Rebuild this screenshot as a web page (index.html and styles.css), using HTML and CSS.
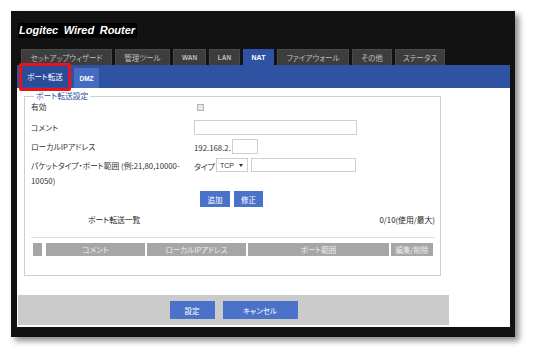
FILE: index.html
```html
<!DOCTYPE html>
<html lang="ja">
<head>
<meta charset="utf-8">
<title>Logitec Wired Router</title>
<link rel="stylesheet" href="styles.css">
</head>
<body>
<div class="page">
  <div class="frame">
    <div class="brand"><span class="logo">Logitec Wired Router</span></div>
    <nav class="tabs">
      <span class="tab t-setup">セットアップウィザード</span>
      <span class="tab t-admin">管理ツール</span>
      <span class="tab t-wan">WAN</span>
      <span class="tab t-lan">LAN</span>
      <span class="tab t-nat active">NAT</span>
      <span class="tab t-fw">ファイアウォール</span>
      <span class="tab t-etc">その他</span>
      <span class="tab t-status">ステータス</span>
    </nav>
    <div class="main">
      <div class="subbar">
        <span class="subtab current">ポート転送</span>
        <span class="subtab dmz">DMZ</span>
        <span class="highlight"></span>
      </div>
      <div class="content">
        <fieldset class="box">
          <legend class="legend">ポート転送設定</legend>
          <div class="row r-enable">
            <span class="label">有効</span>
            <span class="value"><span class="check"></span></span>
          </div>
          <div class="row r-comment">
            <span class="label">コメント</span>
            <span class="value"><span class="input i-comment"></span></span>
          </div>
          <div class="row r-ip">
            <span class="label">ローカルIPアドレス</span>
            <span class="value"><span class="ip">192.168.2.</span><span class="input i-ip"></span></span>
          </div>
          <div class="row r-packet">
            <span class="label two">パケットタイプ・ポート範囲 (例:21,80,10000-<br>10050)</span>
            <span class="value top"><span class="type">タイプ</span><span class="select">TCP<span class="caret"></span></span><span class="input i-port"></span></span>
          </div>
          <div class="actions">
            <span class="btn b-add">追加</span>
            <span class="btn b-edit">修正</span>
          </div>
          <div class="listhead">
            <span class="listtitle">ポート転送一覧</span>
            <span class="count">0/10(使用/最大)</span>
          </div>
          <div class="rule"></div>
          <div class="thead">
            <span class="th"></span>
            <span class="th">コメント</span>
            <span class="th">ローカルIPアドレス</span>
            <span class="th">ポート範囲</span>
            <span class="th">編集/削除</span>
          </div>
        </fieldset>
        <div class="footer">
          <span class="btn f-save">設定</span>
          <span class="btn f-cancel">キャンセル</span>
        </div>
      </div>
    </div>
  </div>
</div>
</body>
</html>
```

FILE: styles.css
```css
* { box-sizing: border-box; }
html, body { margin: 0; padding: 0; background: #fff; }
body {
  font-family: "Noto Sans CJK JP", "Noto Sans", sans-serif;
  font-feature-settings: "palt";
  font-size: 7.8px;
  color: #333;
  width: 534px;
  height: 356px;
  overflow: hidden;
}
.page { padding: 11px 0 0 11px; }
.frame {
  width: 504px;
  height: 326px;
  background: #121212;
  box-shadow: 4px 4px 6px rgba(0,0,0,0.45);
  display: flex;
  flex-direction: column;
}
.brand {
  height: 38px;
  padding: 12px 0 0 7px;
}
.logo {
  display: inline-block;
  background: #000;
  color: #fff;
  font-family: "Liberation Sans", Arial, sans-serif;
  font-weight: bold;
  font-style: italic;
  font-size: 11px;
  line-height: 15px;
  word-spacing: 2.5px;
  padding: 0 2px 0 1px;
  height: 15px;
}
.tabs {
  display: flex;
  gap: 3px;
  height: 16px;
  padding-left: 10px;
}
.tab {
  height: 16px;
  background: #3d3d3d;
  border: 1px solid #4a4a4a;
  border-bottom: none;
  color: #bdbdbd;
  display: flex;
  align-items: center;
  justify-content: center;
  font-size: 7.5px;
  white-space: nowrap;
}
.t-setup { width: 91px; }
.t-admin { width: 55px; }
.t-wan { width: 33px; font-weight: bold; font-family: "Liberation Sans", sans-serif; font-size: 6.5px; }
.t-lan { width: 31px; font-weight: bold; font-family: "Liberation Sans", sans-serif; font-size: 6.5px; }
.t-nat { width: 31px; font-weight: bold; font-family: "Liberation Sans", sans-serif; font-size: 7px; }
.t-fw { width: 72px; }
.t-etc { width: 40px; }
.t-status { width: 50px; }
.tab.active {
  background: #2f52a2;
  border-color: #2f52a2;
  color: #fff;
}
.main {
  margin: 0 5px 10px 6px;
  flex: 1;
  display: flex;
  flex-direction: column;
  background: #fff;
}
.subbar {
  position: relative;
  height: 23px;
  background: #2f52a2;
  display: flex;
  align-items: flex-end;
  padding-left: 5px;
  gap: 6px;
}
.subtab {
  height: 21px;
  display: flex;
  align-items: center;
  justify-content: center;
  color: #fff;
  font-size: 7.5px;
}
.subtab.current { width: 46px; background: #2c4c9a; margin-bottom: 1px; }
.subtab.dmz { width: 25px; height: 20px; background: #466bc2; font-family: "Liberation Sans", sans-serif; font-weight: bold; font-size: 6.5px; }
.highlight {
  position: absolute;
  left: 2px;
  top: -2px;
  width: 52px;
  height: 28px;
  border: 3px solid #e8141b;
  border-radius: 2px;
}
.content {
  flex: 1;
  display: flex;
  flex-direction: column;
}
.box {
  margin: 3px 0 0 7px;
  width: 417px;
  border: 1px solid #cfcfcf;
  padding: 0 5px 19px 6px;
  min-width: 0;
}
.legend {
  color: #2c4f9e;
  font-size: 7.8px;
  line-height: 10px;
  padding: 0 2px;
  margin-left: 3px;
}
.row { display: flex; }
.label { width: 163px; flex: none; line-height: 15px; white-space: nowrap; }
.value { display: flex; align-items: center; gap: 0; }
.value.top { align-items: flex-start; height: 15px; }
.r-enable { height: 12px; align-items: center; }
.r-enable .label { line-height: 12px; }
.check {
  display: block;
  width: 7px;
  height: 7px;
  margin-left: 3px;
  background: #e8e8e8;
  border: 1px solid #b5b5b5;
}
.r-comment { margin-top: 7px; height: 15px; }
.r-ip { margin-top: 4px; height: 15px; }
.r-packet { margin-top: 4px; height: 30px; }
.input {
  display: block;
  background: #fff;
  border: 1px solid #cfcfcf;
}
.i-comment { width: 163px; height: 15px; }
.ip { width: 38px; line-height: 15px; padding-top: 2px; white-space: nowrap; }
.i-ip { width: 26px; height: 15px; }
.type { width: 22px; line-height: 15px; padding-top: 1px; white-space: nowrap; }
.select {
  display: flex;
  align-items: center;
  width: 32px;
  height: 14px;
  border: 1px solid #cfcfcf;
  padding-left: 3px;
  font-family: "Liberation Sans", sans-serif;
  font-size: 7px;
  gap: 5px;
}
.caret {
  width: 0;
  height: 0;
  border-left: 2.5px solid transparent;
  border-right: 2.5px solid transparent;
  border-top: 3px solid #333;
}
.i-port { width: 105px; height: 14px; margin-left: 3px; }
.actions {
  display: flex;
  gap: 4px;
  margin: 3px 0 0 169px;
  height: 16px;
}
.btn {
  display: flex;
  align-items: center;
  justify-content: center;
  background: #4a72c9;
  color: #fff;
  font-size: 7.5px;
}
.b-add { width: 30px; }
.b-edit { width: 29px; }
.listhead {
  display: flex;
  justify-content: space-between;
  align-items: center;
  height: 14px;
  margin-top: 5px;
  padding: 0 0 0 57px;
  color: #222;
}
.rule {
  height: 1px;
  background: #dedede;
  margin-top: 11px;
}
.thead {
  display: grid;
  grid-template-columns: 11px 99px 99px 141px 42px;
  gap: 2px;
  margin: 5px 0 0 2px;
  height: 13px;
}
.th {
  background: #a6a6a6;
  color: #eee;
  display: flex;
  align-items: center;
  justify-content: center;
  font-size: 7.5px;
}
.th:first-child { margin-right: 2px; }
.footer {
  margin: 19px 0 0 1px;
  width: 431px;
  height: 30px;
  background: #cbcbcb;
  display: flex;
  justify-content: center;
  align-items: center;
  gap: 8px;
}
.f-save { width: 45px; height: 18px; }
.f-cancel { width: 75px; height: 18px; }
```
